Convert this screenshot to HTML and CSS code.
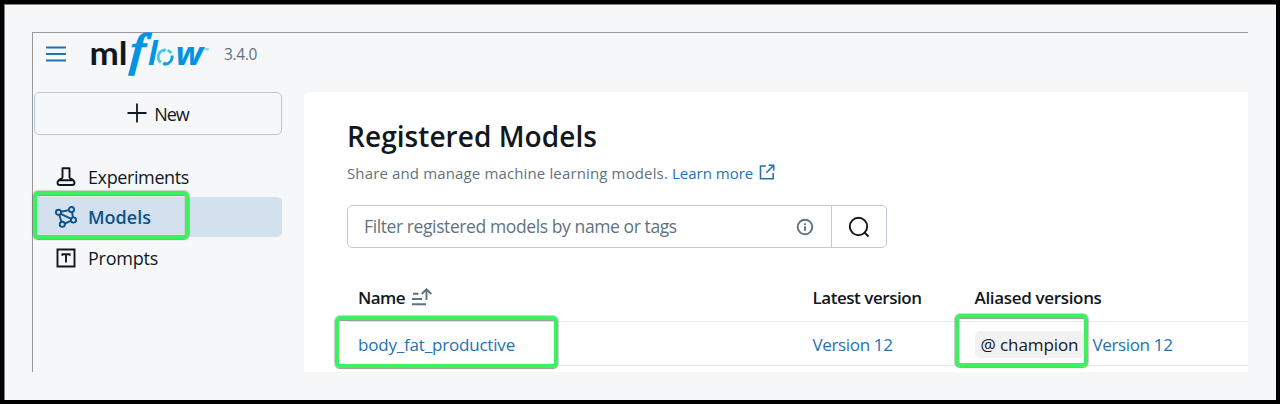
FILE: index.html
```html
<!DOCTYPE html>
<html lang="en">
<head>
<meta charset="utf-8">
<title>MLflow - Registered Models</title>
<link rel="stylesheet" href="styles.css">
</head>
<body>
<div class="frame">
  <div class="app">
    <aside class="side">
      <header class="brand">
        <svg class="menu" width="20" height="16" viewBox="0 0 20 16"><path d="M0 1.500h20M0 8h20M0 14.500h20" stroke="#2272b4" stroke-width="1.900"/></svg>
        <svg class="logo" width="122" height="46" viewBox="0 0 122 46" role="img" aria-label="mlflow">
          <text class="logo-ml" x="-1.500" y="33.300" textLength="38" lengthAdjust="spacingAndGlyphs">ml</text>
          <text class="logo-f" transform="translate(38.500 32.500) skewX(-4) scale(1.080 1)">f</text>
          <text class="logo-l" x="57" y="33.300">l</text>
          <path d="M69.800 30.400A7 7 0 0 1 73 18.100" fill="none" stroke="#43c9ed" stroke-width="2.800"/>
          <path d="M76.600 18.200A7 7 0 0 1 80.300 21.300" fill="none" stroke="#43c9ed" stroke-width="2.800"/>
          <path d="M81 23.500A7 7 0 0 1 73.800 32" fill="none" stroke="#0f9de4" stroke-width="2.800"/>
          <path d="M73 16v4.600l2.600-2.500z" fill="#43c9ed"/><path d="M74.200 29.500v4.600l-2.800-2.100z" fill="#0194e2"/>
          <text class="logo-w" x="84.500" y="33.300" textLength="27.500" lengthAdjust="spacingAndGlyphs">w</text>
          <text class="logo-tm" x="112.500" y="21">™</text>
        </svg>
        <span class="release">3.4.0</span>
      </header>
      <button class="new">
        <svg width="20" height="20" viewBox="0 0 20 20"><path d="M10 .5v19M.5 10h19" stroke="#11171c" stroke-width="1.800"/></svg>
        <span>New</span>
      </button>
      <nav class="nav">
        <a class="item">
          <svg width="22" height="22" viewBox="0 0 22 22" fill="none" stroke="#11171c" stroke-width="1.900" stroke-linejoin="round"><path d="M7.500 2.200h7v9.300c0 1.200 5 2.200 5 5.200 0 1.600-1 2.300-2.400 2.300H4.900c-1.400 0-2.400-.7-2.400-2.300 0-3 5-4 5-5.200zM4 14.300h14"/></svg>
          <span>Experiments</span>
        </a>
        <a class="item active">
          <svg width="22" height="22" viewBox="0 0 22 22" fill="none" stroke="#0e538b" stroke-width="1.900"><circle cx="3.500" cy="6.300" r="2.600"/><circle cx="16.500" cy="3.600" r="2.600"/><circle cx="18.500" cy="14" r="2.600"/><circle cx="7.300" cy="18.300" r="2.600"/><path d="M6 5.800l8-1.700M4.200 8.800l2.300 7M17 6.100l1 5.400M9.800 17.500l6.200-2.600M5.600 7.800l10.700 5"/></svg>
          <span>Models</span>
        </a>
        <a class="item">
          <svg width="22" height="22" viewBox="0 0 22 22" fill="none" stroke="#11171c" stroke-width="1.900"><path d="M2.500 2.500h17v17h-17zM7 7.200h8M11 7.200v8.300M7.300 6.500v2.300M14.700 6.500v2.300"/></svg>
          <span>Prompts</span>
        </a>
      </nav>
    </aside>
    <main class="panel">
      <h1>Registered Models</h1>
      <p class="intro"><span class="blurb">Share and manage machine learning models.</span><a class="more">Learn more</a>
        <svg width="16" height="16" viewBox="0 0 16 16" fill="none" stroke="#2272b4" stroke-width="1.600"><path d="M7 2H1.500v12.700h12.700V9M9.500 1.300h5.200v5.200M14.500 1.500L7.300 8.700"/></svg>
      </p>
      <div class="search">
        <div class="field">
          <span>Filter registered models by name or tags</span>
          <svg width="18" height="18" viewBox="0 0 18 18" fill="none" stroke="#5f7281" stroke-width="1.900"><circle cx="9" cy="9" r="7.300"/><path d="M9 8.300v4.400M9 5.200v1.900"/></svg>
        </div>
        <div class="go">
          <svg width="22" height="22" viewBox="0 0 22 22" fill="none" stroke="#11171c" stroke-width="1.900"><circle cx="10.500" cy="10.500" r="8.700"/><path d="M16.500 16.500l4 4"/></svg>
        </div>
      </div>
      <div class="table">
        <div class="row head">
          <div class="cell"><span class="t-name">Name</span>
            <svg width="20" height="18" viewBox="0 0 20 18" fill="none" stroke="#5f7281" stroke-width="1.900"><path d="M1 5.700h5.500M0 11h10M0 16.300h14M14.500 12V1.500M9.700 6l4.800-4.700L19.300 6"/></svg>
          </div>
          <div class="cell"><span class="t-latest">Latest version</span></div>
          <div class="cell"><span class="t-alias">Aliased versions</span></div>
        </div>
        <div class="row">
          <div class="cell"><a class="t-body">body_fat_productive</a></div>
          <div class="cell"><a class="t-ver">Version 12</a></div>
          <div class="cell"><span class="tag">@ champion</span><a class="t-ver">Version 12</a></div>
        </div>
      </div>
    </main>
  </div>
  <div class="mark mark-nav"></div>
  <div class="mark mark-name"></div>
  <div class="mark mark-alias"></div>
</div>
</body>
</html>
```
FILE: styles.css
```css
* { box-sizing: border-box; }
body { margin: 0; background: #000; font-family: "Open Sans", "Noto Sans", sans-serif; color: #11171c; }
.frame { position: relative; width: 1280px; height: 404px; padding: 28px; border: 4px solid #000; background: #f6f7f9; box-shadow: inset 1px 1px 0 #808080; display: flex; }
.app { width: 1216px; height: 340px; display: flex; border-top: 1px solid #999; border-left: 1px solid #999; }
.side { width: 271px; flex: none; padding-left: 1px; }
.brand { height: 59px; display: flex; align-items: flex-start; }
.menu { margin: 13px 0 0 12px; flex: none; }
.logo { margin: -1px 0 0 25px; flex: none; overflow: visible; }
.logo-ml { font: 700 33px Lato, sans-serif; fill: #11171c; }
.logo-f { font: italic 45px "Liberation Serif", serif; fill: #0194e2; stroke: #0194e2; stroke-width: 2.2; }
.logo-l, .logo-w { font: italic 700 32px "Open Sans", sans-serif; fill: #0194e2; }
.logo-tm { font: 7px "Open Sans", sans-serif; fill: #43a9dd; }
.release { margin: 9px 0 0 11px; font-size: 15.5px; line-height: 24px; letter-spacing: -.35px; color: #5f7281; }
.new { width: 248px; height: 43px; padding: 0; display: flex; align-items: center; justify-content: center; gap: 7px; border: 1px solid #b9c9d6; border-radius: 5px; background: transparent; color: inherit; font: 18px "Open Sans", sans-serif; letter-spacing: -1px; }
.new svg { margin-top: -2px; }
.new span { margin-top: 1px; }
.nav { padding-top: 22px; display: flex; flex-direction: column; }
.item { width: 248px; height: 40px; padding-left: 21px; display: flex; align-items: center; gap: 11px; border-radius: 5px; font-size: 18px; line-height: 24px; letter-spacing: -.39px; }
.item.active { background: #d3e0ed; color: #0e538b; font-weight: 600; letter-spacing: 0; }
.item:last-child { margin-top: 1px; letter-spacing: -.24px; }
.panel { flex: 1; margin-top: 59px; padding: 24px 0 0 43px; background: #fff; border-radius: 5px 0 0; }
h1 { margin: 0; font-size: 28px; line-height: 40px; font-weight: 600; letter-spacing: .06px; }
.intro { margin: 5px 0 0; height: 24px; display: flex; align-items: center; font-size: 15px; line-height: 24px; color: #5f7281; }
.blurb { letter-spacing: .14px; margin-right: 4px; }
.more { margin-right: 6px; color: #2272b4; }
.intro svg { margin-top: -3px; }
.search { width: 540px; height: 43px; margin-top: 20px; display: flex; border: 1px solid #bccad6; border-radius: 5px; }
.field { flex: 1; display: flex; align-items: center; justify-content: space-between; padding: 0 17px 0 16px; border-right: 1px solid #bccad6; color: #5f7281; font-size: 17.5px; letter-spacing: -.4px; }
.field span { margin-top: -1px; }
.go { width: 54px; display: flex; align-items: center; justify-content: center; }
.table { margin-top: 25px; }
.row { display: grid; grid-template-columns: 454.5px 162px 1fr; height: 44px; padding-left: 11px; border-bottom: 1px solid #e6eaed; font-size: 17px; line-height: 24px; }
.row.head { height: 49px; font-weight: 600; }
.cell { display: flex; align-items: center; padding-top: 2px; }
.head .cell { padding-top: 1px; }
.cell svg { margin-top: -2px; }
.t-name { margin-right: 7px; letter-spacing: -.55px; }
.t-latest { letter-spacing: -.46px; }
.t-alias { letter-spacing: -.33px; }
.t-body, .t-ver { color: #2272b4; letter-spacing: -.19px; }
.t-ver { letter-spacing: -.35px; }
.tag { height: 27px; margin-right: 8px; padding: 1px 6px 0; border-radius: 5px; background: #f2f2f3; letter-spacing: -.08px; line-height: 26px; }
.mark { position: absolute; border: 4px solid #3cf05f; border-radius: 5px; box-shadow: 0 0 1px 1px rgba(60, 80, 65, .25), 0 1px 1px rgba(60, 80, 65, .4), inset 0 1px 1px rgba(60, 80, 65, .6); }
.mark-nav { left: 29px; top: 187px; width: 156px; height: 48px; }
.mark-name { left: 331px; top: 312px; width: 223px; height: 52px; }
.mark-alias { left: 951px; top: 310px; width: 133px; height: 53px; }
```
